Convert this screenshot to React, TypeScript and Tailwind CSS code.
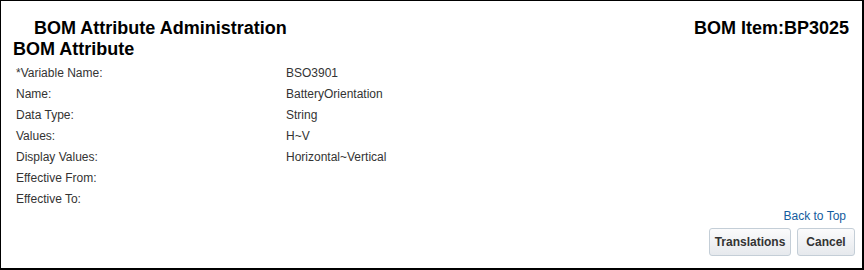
const rows: [string, string][] = [
  ["*Variable Name:", "BSO3901"],
  ["Name:", "BatteryOrientation"],
  ["Data Type:", "String"],
  ["Values:", "H~V"],
  ["Display Values:", "Horizontal~Vertical"],
  ["Effective From:", ""],
  ["Effective To:", ""],
];

export default function App() {
  return (
    <div className="w-[864px] h-[270px] border-l border-t border-r-2 border-b-2 border-black bg-white font-['Liberation_Sans',Arial,sans-serif] flex flex-col">
      <div className="flex items-end justify-between pt-[17px] pl-[33px] pr-[13px]">
        <h1 className="text-[18px] font-bold leading-[21px] text-black">BOM Attribute Administration</h1>
        <div className="text-[18px] font-bold leading-[21px] text-black">BOM Item:BP3025</div>
      </div>
      <h2 className="text-[18px] font-bold leading-[21px] text-black pl-[12px]">BOM Attribute</h2>
      <div className="flex flex-col pl-[15px] mt-[3px]">
        {rows.map(([label, value]) => (
          <div key={label} className="grid grid-cols-[270px_1fr] text-[12px] leading-[21px] text-[#333]">
            <span>{label}</span>
            <span>{value}</span>
          </div>
        ))}
      </div>
      <div className="flex justify-end pr-[16px] mt-[-2px]">
        <a href="#" className="text-[12px] leading-[16px] text-[#145c9e]">Back to Top</a>
      </div>
      <div className="flex justify-end gap-[6px] pr-[7px] mt-[4px]">
        <button className="w-[82px] h-[28px] rounded-[3px] border border-[#c4ced7] bg-gradient-to-b from-[#fbfbfc] to-[#e6e9ed] text-[12px] font-bold text-[#333]">Translations</button>
        <button className="w-[58px] h-[28px] rounded-[3px] border border-[#c4ced7] bg-gradient-to-b from-[#fbfbfc] to-[#e6e9ed] text-[12px] font-bold text-[#333]">Cancel</button>
      </div>
    </div>
  );
}
